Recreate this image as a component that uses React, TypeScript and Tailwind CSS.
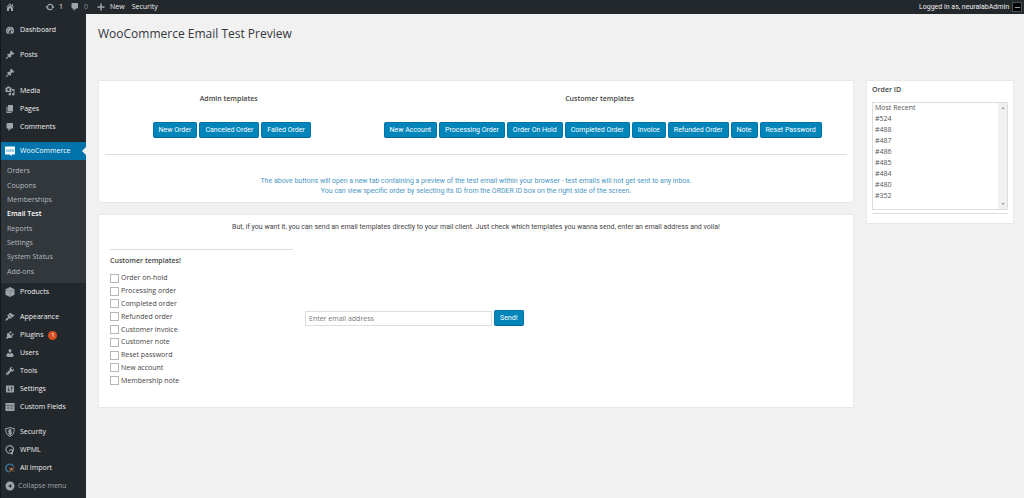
import type { ReactNode } from "react";

const icons: Record<string, ReactNode> = {
  home: <path d="M16 8.5l1.53 1.53-1.06 1.06L10 4.6l-6.47 6.49-1.06-1.06L10 2.5l4 4v-2h2v4zm-6-2.46l6 5.99V18H12v-5H8v5H4v-5.97z" />,
  update: <path d="M10.2 3.28c3.53 0 6.43 2.61 6.92 6h2.08l-3.5 4-3.5-4h2.32c-.45-1.97-2.21-3.45-4.32-3.45-1.45 0-2.73.71-3.54 1.78L4.95 5.66C6.23 4.2 8.11 3.28 10.2 3.28zm-.4 13.44c-3.52 0-6.43-2.61-6.92-6H.8l3.5-4c1.17 1.33 2.33 2.67 3.5 4H5.48c.45 1.97 2.21 3.45 4.32 3.45 1.45 0 2.73-.71 3.54-1.78l1.71 1.95c-1.28 1.46-3.15 2.38-5.25 2.38z" />,
  plus: <path d="M17 8.5v3h-5.500v5.500h-3v-5.500H3v-3h5.500V3h3v5.500z" />,
  dashboard: (
    <>
      <path d="M3.800 17h12.400c1.200-1.600 1.800-3.500 1.800-5.500a8 8 0 0 0-16 0c0 2 .6 3.900 1.800 5.500z" />
      <g fill="#23282d">
        <circle cx="10" cy="6" r="1.100" />
        <circle cx="6.200" cy="7.600" r="1.100" />
        <circle cx="4.800" cy="11.500" r="1.100" />
        <circle cx="15.200" cy="11.500" r="1.100" />
        <path d="M14.800 6.500l-3.500 6.700a2 2 0 1 1-2-1z" />
      </g>
    </>
  ),
  pin: <path d="M10.44 3.02l1.82-1.82 6.36 6.35-1.83 1.82c-1.05-.68-2.48-.57-3.41.36l-.75.75c-.92.93-1.04 2.35-.35 3.41l-1.83 1.82-2.41-2.41-2.8 2.79c-.42.42-3.38 2.71-3.8 2.29s1.86-3.39 2.28-3.81l2.79-2.79L4.1 9.36l1.83-1.82c1.05.69 2.48.57 3.4-.36l.75-.75c.93-.92 1.05-2.35.36-3.41z" />,
  media: <path d="M13 11V4c0-.55-.45-1-1-1h-1.67L9 1H5L3.67 3H2c-.55 0-1 .45-1 1v7c0 .55.45 1 1 1h10c.55 0 1-.45 1-1zM7 4.500c1.38 0 2.500 1.12 2.500 2.500S8.380 9.500 7 9.500 4.500 8.380 4.500 7 5.620 4.500 7 4.500zM14 6h5v10.500c0 1.380-1.120 2.500-2.500 2.500S14 17.880 14 16.500s1.120-2.500 2.500-2.500c.17 0 .34.02.5.05V9h-3V6zm-4 8.050V13h2v3.500c0 1.380-1.120 2.500-2.500 2.500S7 17.880 7 16.500 8.120 14 9.500 14c.17 0 .34.02.5.05z" />,
  page: <path d="M6 15V2h10v13H6zm-1 1h8v2H3V5h2v11z" />,
  comment: <path d="M5 2h9c1.1 0 2 .9 2 2v7c0 1.1-.9 2-2 2h-2l-5 5v-5H5c-1.1 0-2-.9-2-2V4c0-1.1.9-2 2-2z" />,
  woo: (
    <>
      <path fill="#fff" d="M2 1h16c1 0 2 1 2 2v12c0 1-1 2-2 2h-5l1 3-5-3H2c-1 0-2-1-2-2V3c0-1 1-2 2-2z" />
      <path fill="none" stroke="#4aa3cf" strokeWidth="1.200" d="M2.500 6.500l1.500 5 2-4 1.500 4 1.200-5M10 7h2.500v4H10zM15 7h2.500v4H15z" />
    </>
  ),
  product: (
    <>
      <path d="M10 0l9 4.500v11L10 20l-9-4.500v-11z" />
      <path fill="none" stroke="#6d7276" strokeWidth="1" d="M1.500 5L10 9.300 18.500 5M10 9.300V19.500M5.500 2.500l8.700 4.500v4" />
    </>
  ),
  appearance: <path d="M14.48 11.06L7.41 3.99l1.5-1.5c.5-.56 2.3-.47 3.51.32 1.21.8 1.43 1.28 2.91 2.1 1.18.64 2.45 1.26 4.45.85zm-.71.71L6.7 4.7 4.93 6.47c-.39.39-.39 1.02 0 1.41l1.06 1.06c.39.39.39 1.03 0 1.42-.6.6-1.43 1.11-2.21 1.69-.35.26-.7.53-1.01.84C1.43 14.23.4 16.08 1.4 17.07c.99 1 2.84-.03 4.18-1.36.31-.31.58-.66.85-1.02.57-.78 1.08-1.61 1.69-2.21.39-.39 1.02-.39 1.41 0l1.06 1.06c.39.39 1.02.39 1.41 0z" />,
  plugin: <path d="M13.11 4.36L9.87 7.6 8 5.73l3.24-3.24c.35-.34 1.05-.2 1.56.32.52.51.66 1.21.31 1.55zm-8 1.77l.91-1.12 9.01 9.01-1.19.84c-.71.71-2.63 1.16-3.82 1.16H6.14L4.9 17.26c-.59.59-1.54.59-2.12 0-.59-.58-.59-1.53 0-2.12l1.24-1.24v-3.88c0-1.13.4-3.19 1.09-3.89zm7.26 3.97l3.24-3.24c.34-.35 1.04-.21 1.55.31.52.51.66 1.21.31 1.55l-3.24 3.25z" />,
  user: <path d="M10 9.25c-2.27 0-2.73-3.44-2.73-3.44C7 4.02 7.82 2 9.97 2c2.16 0 2.98 2.02 2.71 3.81 0 0-.41 3.44-2.68 3.44zm0 2.57L12.72 10c2.39 0 4.52 2.33 4.52 4.53v2.49s-3.65 1.13-7.24 1.13c-3.65 0-7.24-1.13-7.24-1.13v-2.49c0-2.25 1.94-4.48 4.47-4.48z" />,
  tool: <path d="M16.68 9.77c-1.34 1.34-3.3 1.67-4.95.99l-5.41 6.52c-.99.99-2.59.99-3.58 0s-.99-2.59 0-3.57l6.52-5.42c-.68-1.65-.35-3.61.99-4.95 1.28-1.28 3.12-1.62 4.72-1.06l-2.89 2.89 2.82 2.82 2.86-2.87c.53 1.58.18 3.39-1.08 4.65zM3.81 16.21c.4.39 1.04.39 1.43 0 .4-.4.4-1.04 0-1.43-.39-.4-1.03-.4-1.43 0-.39.39-.39 1.03 0 1.43z" />,
  settings: <path d="M18 16V4c0-.55-.45-1-1-1H3c-.55 0-1 .45-1 1v12c0 .55.45 1 1 1h14c.55 0 1-.45 1-1zM8 11h1c.55 0 1 .45 1 1s-.45 1-1 1H8v1.500c0 .28-.22.5-.5.5s-.5-.22-.5-.5V13H6c-.55 0-1-.45-1-1s.45-1 1-1h1V5.500c0-.28.22-.5.5-.5s.5.22.5.5V11zm5-2h-1c-.55 0-1-.45-1-1s.45-1 1-1h1V5.500c0-.28.22-.5.5-.5s.5.22.5.5V7h1c.55 0 1 .45 1 1s-.45 1-1 1h-1v5.500c0 .28-.22.5-.5.5s-.5-.22-.5-.5V9z" />,
  fields: (
    <>
      <path d="M2 2h16c.6 0 1 .4 1 1v14c0 .6-.4 1-1 1H2c-.6 0-1-.4-1-1V3c0-.6.4-1 1-1z" />
      <path fill="none" stroke="#4b5055" strokeWidth="1.500" d="M2.500 6.500h15M4 10h5M4 13.500h5M11 10h5M11 13.500h5" />
    </>
  ),
  shield: (
    <>
      <path fill="none" stroke="currentColor" strokeWidth="2" d="M10 1c2.500 1.600 5.300 2 8.500 2 .4 8-2 13-8.500 16C3.500 16 1.100 11 1.500 3c3.200 0 6-.4 8.500-2z" />
      <path d="M8.500 4h3v2l2 1v2l-3-.5 3 2.500v3l-2 1v1.500h-3V15l-2-1v-2l3 .5-3-2.500V7l2-1z" />
    </>
  ),
  wpml: (
    <>
      <path fill="none" stroke="currentColor" strokeWidth="2.200" d="M13 15.500A7.500 7.500 0 1 1 17 8.500c0 1.500-.4 3-1.300 4.200M9.500 12.500c-.5-3 3-4.500 5-2.500 1.500 2 0 4.500-1.500 5.500l1.500 3.500" />
      <path d="M12 14l4 .5v5z" />
    </>
  ),
  octopus: (
    <>
      <path fill="none" stroke="#3b7ba5" strokeWidth="2.600" d="M8 18A8 8 0 1 1 17 7" />
      <path fill="none" stroke="#b5714d" strokeWidth="1.600" d="M8 9l4 3M19 9l-4 3M13.500 12v3M13.500 13l-3.500 5M14 13l4.500 4.500M13.500 13l-5 1" />
      <circle cx="13.500" cy="11.500" r="2" fill="#c9744a" />
    </>
  ),
  collapse: <path fillRule="evenodd" d="M10 1a9 9 0 1 1 0 18 9 9 0 0 1 0-18zm2.500 5L6.500 10l6 4z" />,
};

function Icon({ name }: { name: string }) {
  return (
    <svg viewBox="0 0 20 20" fill="currentColor" aria-hidden="true" className="size-[10px] shrink-0 text-[#a0a5aa]">
      {icons[name]}
    </svg>
  );
}

type Item = { label: string; icon: string; badge?: string };

const contentMenu: Item[] = [
  { label: "Posts", icon: "pin" },
  { label: "", icon: "pin" },
  { label: "Media", icon: "media" },
  { label: "Pages", icon: "page" },
  { label: "Comments", icon: "comment" },
];

const siteMenu: Item[] = [
  { label: "Appearance", icon: "appearance" },
  { label: "Plugins", icon: "plugin", badge: "1" },
  { label: "Users", icon: "user" },
  { label: "Tools", icon: "tool" },
  { label: "Settings", icon: "settings" },
  { label: "Custom Fields", icon: "fields" },
];

const pluginMenu: Item[] = [
  { label: "Security", icon: "shield" },
  { label: "WPML", icon: "wpml" },
  { label: "All Import", icon: "octopus" },
];

const wooMenu = ["Orders", "Coupons", "Memberships", "Email Test", "Reports", "Settings", "System Status", "Add-ons"];

const adminTemplates = ["New Order", "Canceled Order", "Failed Order"];

const customerTemplates = [
  "New Account",
  "Processing Order",
  "Order On Hold",
  "Completed Order",
  "Invoice",
  "Refunded Order",
  "Note",
  "Reset Password",
];

const mailTemplates = [
  "Order on-hold",
  "Processing order",
  "Completed order",
  "Refunded order",
  "Customer invoice",
  "Customer note",
  "Reset password",
  "New account",
  "Membership note",
];

const orders = ["Most Recent", "#524", "#488", "#487", "#486", "#485", "#484", "#480", "#352"];

function MenuItem({ label, icon, badge }: Item) {
  return (
    <li>
      <a href="#" aria-label={label || "Posts"} className="flex h-[18px] items-center gap-[5px] pl-1 font-medium text-[#eee]">
        <Icon name={icon} />
        {label}
        {badge && (
          <span className="flex size-[9px] items-center justify-center rounded-full bg-[#d54e21] text-[6px] text-white">{badge}</span>
        )}
      </a>
    </li>
  );
}

function MenuGroup({ items }: { items: Item[] }) {
  return (
    <ul className="mt-[7px]">
      {items.map((item, i) => (
        <MenuItem key={i} {...item} />
      ))}
    </ul>
  );
}

function AdminBar() {
  return (
    <header className="flex h-[14px] items-center justify-between bg-[#23282d] pr-[2px] pl-1 font-medium text-[#eee]">
      <div className="flex items-center">
        <a href="#" aria-label="Home">
          <Icon name="home" />
        </a>
        <a href="#" className="ml-[30px] flex items-center gap-1">
          <Icon name="update" />1
        </a>
        <a href="#" className="ml-[7px] flex items-center gap-1 text-[#8a8f94]">
          <Icon name="comment" />0
        </a>
        <a href="#" className="ml-2 flex items-center gap-1">
          <Icon name="plus" />
          New
        </a>
        <a href="#" className="ml-[7px]">
          Security
        </a>
      </div>
      <a href="#" className="flex items-center gap-[3px] font-['Roboto','Open_Sans',sans-serif] font-normal">
        Logged in as, neuralabAdmin
        <span className="flex size-[10px] items-center justify-center border border-[#4b5055] bg-black">
          <span className="h-px w-[5px] bg-[#999]" />
        </span>
      </a>
    </header>
  );
}

function Sidebar() {
  return (
    <nav className="w-[85px] shrink-0 bg-[#23282d]">
      <MenuGroup items={[{ label: "Dashboard", icon: "dashboard" }]} />
      <MenuGroup items={contentMenu} />
      <a href="#" className="relative mt-[6px] flex h-[18px] items-center gap-[5px] bg-[#0073aa] pl-1 font-medium text-white">
        <Icon name="woo" />
        WooCommerce
        <span className="absolute right-0 border-y-4 border-r-4 border-y-transparent border-r-[#f1f1f1]" />
      </a>
      <ul className="flex h-[123px] flex-col bg-[#32373c] py-1">
        {wooMenu.map((label) => (
          <li key={label} className="flex flex-1 items-center pl-[6px]">
            <a href="#" className={label === "Email Test" ? "font-semibold text-white" : "text-[#b4b9be]"}>
              {label}
            </a>
          </li>
        ))}
      </ul>
      <ul>
        <MenuItem label="Products" icon="product" />
      </ul>
      <MenuGroup items={siteMenu} />
      <MenuGroup items={pluginMenu} />
      <button type="button" className="flex h-[18px] items-center gap-[3px] pl-1 text-[#a0a5aa]">
        <Icon name="collapse" />
        Collapse menu
      </button>
    </nav>
  );
}

function Button({ children }: { children: ReactNode }) {
  return (
    <button
      type="button"
      className="h-4 shrink-0 rounded-[2px] border border-[#0073aa] border-b-[#006799] bg-[#0085ba] px-[5px] font-['Roboto','Open_Sans',sans-serif] leading-[14px] whitespace-nowrap text-white"
    >
      {children}
    </button>
  );
}

function TemplateColumn({ title, items, className }: { title: string; items: string[]; className: string }) {
  return (
    <div className={`flex flex-col items-center ${className}`}>
      <h2 className="font-semibold">{title}</h2>
      <div className="mt-[18px] flex gap-[2px] pl-[6px]">
        {items.map((label) => (
          <Button key={label}>{label}</Button>
        ))}
      </div>
    </div>
  );
}

function PreviewCard() {
  return (
    <section className="border border-[#e8e8e8] bg-white px-[6px] pt-[13px] pb-[6px]">
      <div className="flex">
        <TemplateColumn title="Admin templates" items={adminTemplates} className="w-1/3" />
        <TemplateColumn title="Customer templates" items={customerTemplates} className="w-2/3" />
      </div>
      <hr className="mt-4 border-[#ddd]" />
      <p className="mt-[21px] text-center font-['Roboto','Open_Sans',sans-serif] text-[#4a97c4]">
        The above buttons will open a new tab containing a preview of the test email within your browser - test emails will not get sent to any inbox.
        <br />
        You can view specific order by selecting its ID from the ORDER ID box on the right side of the screen.
      </p>
    </section>
  );
}

function SendCard() {
  return (
    <section className="border border-[#e8e8e8] bg-white px-[11px] pt-[7px] pb-5">
      <p className="text-center font-['Roboto','Open_Sans',sans-serif]">
        But, if you want it, you can send an email templates directly to your mail client. Just check which templates you wanna send, enter an email
        address and voila!
      </p>
      <form className="mt-[17px] flex items-center gap-3">
        <fieldset className="w-1/4 border-t border-[#ddd] pt-[6px]">
          <h2 className="font-semibold">Customer templates!</h2>
          <ul className="mt-[6px] flex h-[115px] flex-col">
            {mailTemplates.map((label) => (
              <li key={label} className="flex flex-1 items-center">
                <label className="flex items-center gap-[2px]">
                  <input type="checkbox" className="size-[9px] appearance-none border border-[#b4b9be] bg-white checked:bg-[#0085ba]" />
                  {label}
                </label>
              </li>
            ))}
          </ul>
        </fieldset>
        <div className="flex flex-1 items-center gap-[2px]">
          <input
            type="email"
            aria-label="Email address"
            placeholder="Enter email address"
            className="h-[15px] w-[187px] border border-[#ddd] px-[3px] text-[7px] placeholder:text-[#777]"
          />
          <Button>Send!</Button>
        </div>
      </form>
    </section>
  );
}

function OrderBox() {
  return (
    <aside className="w-[148px] shrink-0 border border-[#e8e8e8] bg-white px-[5px] pt-1 pb-[9px]">
      <label htmlFor="order-id" className="block font-semibold">
        Order ID
      </label>
      <div className="mt-[7px] flex border border-[#ddd]">
        <select id="order-id" multiple size={9} className="h-[106px] min-w-0 flex-1 overflow-hidden text-[7px] text-[#555]">
          {orders.map((order) => (
            <option key={order} className="h-[11px] min-h-0 px-[2px] py-0 leading-[11px]">
              {order}
            </option>
          ))}
        </select>
        <div aria-hidden="true" className="flex w-[9px] flex-col items-center justify-between bg-[#f1f1f1] py-1">
          <span className="border-x-2 border-b-2 border-x-transparent border-b-[#a3a3a3]" />
          <span className="border-x-2 border-t-2 border-x-transparent border-t-[#a3a3a3]" />
        </div>
      </div>
      <hr className="mt-[3px] border-[#ddd]" />
    </aside>
  );
}

export default function App() {
  return (
    <div className="flex min-h-screen flex-col border-l border-[#15181b] bg-[#f1f1f1] font-['Open_Sans','Noto_Sans',sans-serif] text-[7px] leading-[10px] text-[#444]">
      <AdminBar />
      <div className="flex flex-1">
        <Sidebar />
        <main className="min-w-0 flex-1 pt-3 pr-[10px] pl-3">
          <h1 className="text-[12px] leading-4 text-[#32373c]">WooCommerce Email Test Preview</h1>
          <div className="mt-[38px] flex items-start gap-3">
            <div className="flex min-w-0 flex-1 flex-col gap-[11px]">
              <PreviewCard />
              <SendCard />
            </div>
            <OrderBox />
          </div>
        </main>
      </div>
    </div>
  );
}
